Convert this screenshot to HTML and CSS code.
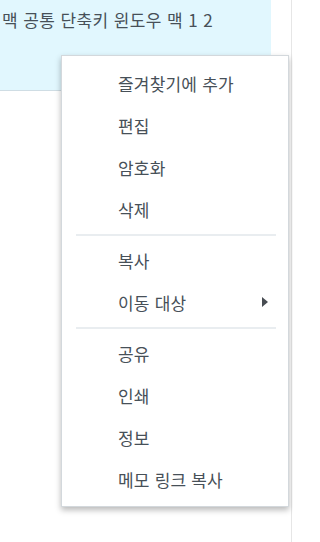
FILE: index.html
```html
<!DOCTYPE html>
<html lang="ko">
<head>
<meta charset="utf-8">
<link rel="stylesheet" href="styles.css">
</head>
<body>
<div class="page">
  <div class="banner">
    <p class="title">맥 공통 단축키 윈도우 맥 1 2</p>
  </div>
  <div class="rail"></div>
</div>
<div class="menu">
  <div class="item">즐겨찾기에 추가</div>
  <div class="item">편집</div>
  <div class="item">암호화</div>
  <div class="item">삭제</div>
  <div class="divider"></div>
  <div class="item">복사</div>
  <div class="item has-sub">이동 대상<span class="arrow"></span></div>
  <div class="divider"></div>
  <div class="item">공유</div>
  <div class="item">인쇄</div>
  <div class="item">정보</div>
  <div class="item">메모 링크 복사</div>
</div>
</body>
</html>
```
FILE: styles.css
```css
html, body {
  margin: 0;
  padding: 0;
  background: #ffffff;
}
body {
  width: 293px;
  height: 542px;
  overflow: hidden;
  position: relative;
  font-family: "Noto Sans CJK KR", "Noto Sans", sans-serif;
  color: #475058;
}
.page {
  display: flex;
  height: 542px;
}
.banner {
  width: 271px;
  height: 90px;
  background: #e1f7fe;
  border-bottom: 1px solid #cfdde4;
  flex: none;
}
.title {
  margin: 0;
  padding: 8px 0 0 2px;
  font-size: 17px;
  line-height: 24px;
  letter-spacing: 0.4px;
  white-space: nowrap;
}
.rail {
  margin-left: 20px;
  width: 1px;
  background: #e6e6e6;
}
.menu {
  position: absolute;
  left: 61px;
  top: 55px;
  width: 226px;
  padding: 6px 0;
  background: #ffffff;
  border: 1px solid #d3d8dc;
  box-shadow: 0 3px 6px rgba(0, 0, 0, 0.28);
}
.item {
  height: 42px;
  display: flex;
  align-items: center;
  padding-left: 56px;
  padding-right: 20px;
  font-size: 17px;
  letter-spacing: 0.2px;
  white-space: nowrap;
}
.has-sub {
  justify-content: space-between;
}
.arrow {
  width: 0;
  height: 0;
  border-top: 5px solid transparent;
  border-bottom: 5px solid transparent;
  border-left: 6px solid #474c52;
}
.divider {
  height: 2px;
  background: #e9edf0;
  margin: 4px 12px 3px 14px;
}
```
